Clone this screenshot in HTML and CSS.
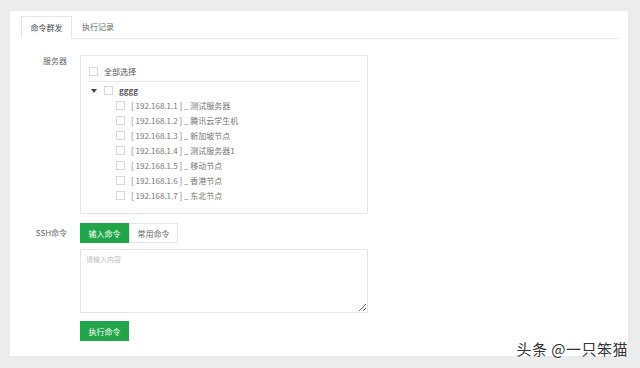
FILE: index.html
```html
<!DOCTYPE html>
<html lang="zh-CN">
<head>
<meta charset="utf-8">
<title>命令群发</title>
<meta name="viewport" content="width=device-width,initial-scale=1">
<link rel="stylesheet" href="styles.css">
</head>
<body>

<div class="card">
  <div class="tabs">
    <div class="tab active">命令群发</div>
    <div class="tab">执行记录</div>
  </div>

  <div class="form-row">
    <div class="label">服务器</div>
    <div class="server-box">
      <div class="check-all"><span class="cb"></span>全部选择</div>
      <div class="tree">
        <div class="node group"><span class="arrow"></span><span class="cb"></span><b>gggg</b></div>
        <div class="children">
          <div class="node"><span class="cb"></span>[ 192.168.1.1 ] _ 测试服务器</div>
          <div class="node"><span class="cb"></span>[ 192.168.1.2 ] _ 腾讯云学生机</div>
          <div class="node"><span class="cb"></span>[ 192.168.1.3 ] _ 新加坡节点</div>
          <div class="node"><span class="cb"></span>[ 192.168.1.4 ] _ 测试服务器1</div>
          <div class="node"><span class="cb"></span>[ 192.168.1.5 ] _ 移动节点</div>
          <div class="node"><span class="cb"></span>[ 192.168.1.6 ] _ 香港节点</div>
          <div class="node"><span class="cb"></span>[ 192.168.1.7 ] _ 东北节点</div>
        </div>
      </div>
    </div>
  </div>

  <div class="form-row ssh">
    <div class="label">SSH命令</div>
    <div class="ssh-body">
      <div class="btn-group">
        <button class="btn green">输入命令</button>
        <button class="btn plain">常用命令</button>
      </div>
      <textarea placeholder="请输入内容"></textarea>
      <button class="btn green run">执行命令</button>
    </div>
  </div>
</div>

<div class="watermark">头条 @一只笨猫</div>

</body>
</html>
```

FILE: styles.css
```css
:root{--green:#22a548;--border:#e6e6e6;--text:#666}
*{box-sizing:border-box;font-family:"Noto Sans CJK SC","Liberation Sans",sans-serif}
body{margin:0;background:#ececec;height:368px;overflow:hidden;position:relative}
.card{margin:11px 0 0 10px;width:618px;height:345px;background:#fff;padding:5px 8px 0 11px;
      box-shadow:0 0 1px rgba(0,0,0,.08)}

.tabs{display:flex;border-bottom:1px solid #ececec;height:23px}
.tab{height:23px;padding:0 10px;font-size:8px;line-height:21px;color:#666}
.tab.active{width:51px;padding:0;text-align:center;border:1px solid var(--border);
            border-bottom-color:#fff;background:#fff;color:#444}

.form-row{display:flex;margin-top:16px}
.label{width:46px;margin-right:13px;text-align:right;font-size:8px;color:var(--text);line-height:12px}
.server-box{width:288px;height:159px;border:1px solid var(--border);padding:5px 8px 0 7px}
.cb{display:inline-block;width:9px;height:9px;border:1px solid #d8d8d8;background:#fff;
    margin-right:6px;vertical-align:-1px}
.check-all{font-size:8px;color:#555;padding:5px 0 4px 1px;line-height:11px;border-bottom:1px solid #ececec}
.tree{padding-top:1px}
.node{font-size:8px;color:#777;line-height:15px;height:15px;white-space:nowrap}
.group{padding-left:3px}
.group b{font-weight:bold;color:#555}
.arrow{display:inline-block;width:0;height:0;border-left:3.5px solid transparent;
       border-right:3.5px solid transparent;border-top:4px solid #444;margin-right:7px;vertical-align:1px}
.children{padding-left:28px}

.ssh{margin-top:9px}
.ssh .label{line-height:20px}
.ssh-body{display:flex;flex-direction:column;width:288px}
.btn-group{display:flex}
.btn{height:20px;font-size:8px;padding:0;border:1px solid var(--border);background:#fff;color:#666;cursor:pointer}
.btn.green{background:var(--green);border-color:var(--green);color:#fff}
.btn-group .btn{width:49px}
textarea{margin-top:6px;width:288px;height:64px;border:1px solid var(--border);resize:vertical;
         font-size:7px;padding:4px 5px;color:#555}
textarea::placeholder{color:#bbb}
.run{width:49px;margin-top:8px}

.watermark{position:absolute;right:12px;bottom:9px;font-size:15px;color:#333;letter-spacing:.5px;
           text-shadow:0 0 2px #fff,0 0 1px #fff}
```
